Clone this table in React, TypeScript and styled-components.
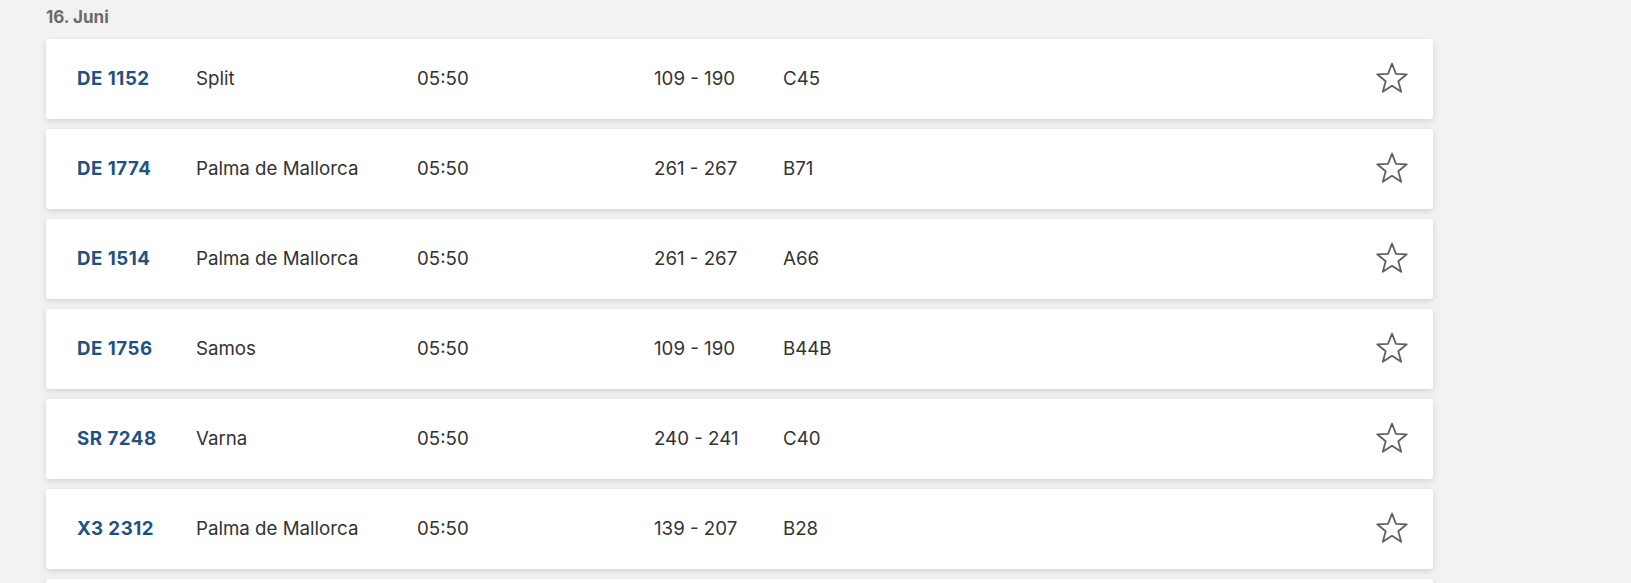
import React from "react";
import styled, { createGlobalStyle } from "styled-components";

interface Flight {
  number: string;
  destination: string;
  time: string;
  counters: string;
  gate: string;
}

const flights: Flight[] = [
  { number: "DE 1152", destination: "Split", time: "05:50", counters: "109 - 190", gate: "C45" },
  { number: "DE 1774", destination: "Palma de Mallorca", time: "05:50", counters: "261 - 267", gate: "B71" },
  { number: "DE 1514", destination: "Palma de Mallorca", time: "05:50", counters: "261 - 267", gate: "A66" },
  { number: "DE 1756", destination: "Samos", time: "05:50", counters: "109 - 190", gate: "B44B" },
  { number: "SR 7248", destination: "Varna", time: "05:50", counters: "240 - 241", gate: "C40" },
  { number: "X3 2312", destination: "Palma de Mallorca", time: "05:50", counters: "139 - 207", gate: "B28" },
];

const GlobalStyle = createGlobalStyle`
  html, body {
    margin: 0;
    padding: 0;
    background: #f2f2f2;
    overflow: hidden;
  }
`;

const StarIcon = () => (
  <svg width="34" height="32" viewBox="0 0 34 32" fill="none">
    <path
      d="M17 1.6 L20.9 11.8 L31.8 12.3 L23.3 19.2 L26.2 29.8 L17 23.8 L7.8 29.8 L10.7 19.2 L2.2 12.3 L13.1 11.8 Z"
      stroke="#5f5f63"
      strokeWidth="1.8"
      strokeLinejoin="round"
    />
  </svg>
);

const App = () => {
  return (
    <>
      <GlobalStyle />
      <Page>
        <DayTitle>16. Juni</DayTitle>
        <List>
          {flights.map((f) => (
            <Card key={f.number}>
              <FlightNo>{f.number}</FlightNo>
              <Cell>{f.destination}</Cell>
              <Cell>{f.time}</Cell>
              <Cell>{f.counters}</Cell>
              <Cell>{f.gate}</Cell>
              <FavButton aria-label="Favorit">
                <StarIcon />
              </FavButton>
            </Card>
          ))}
          {/* next card, only its top edge is in view */}
          <Card />
        </List>
      </Page>
    </>
  );
};

export default App;

const Page = styled.div`
  padding: 7px 0 0 46px;
  width: 1387px;
  font-family: Inter, "Liberation Sans", sans-serif;
`;

const DayTitle = styled.h2`
  margin: 0 0 11px;
  font-size: 17px;
  line-height: 21px;
  font-weight: 700;
  color: #6b6b6b;
`;

const List = styled.div`
  display: flex;
  flex-direction: column;
  gap: 10px;
`;

const Card = styled.div`
  display: grid;
  grid-template-columns: 119px 221px 237px 129px 1fr auto;
  align-items: center;
  height: 80px;
  padding: 0 24px 2px 31px;
  box-sizing: border-box;
  background: #fff;
  border-radius: 3px;
  box-shadow: 0 2px 6px rgba(0, 0, 0, 0.13);
`;

const Cell = styled.span`
  font-size: 18.7px;
  color: #333333;
`;

const FlightNo = styled(Cell)`
  font-weight: 700;
  letter-spacing: 0.5px;
  color: #1f5282;
`;

const FavButton = styled.button`
  display: flex;
  padding: 0;
  border: 0;
  background: none;
  cursor: pointer;
`;
